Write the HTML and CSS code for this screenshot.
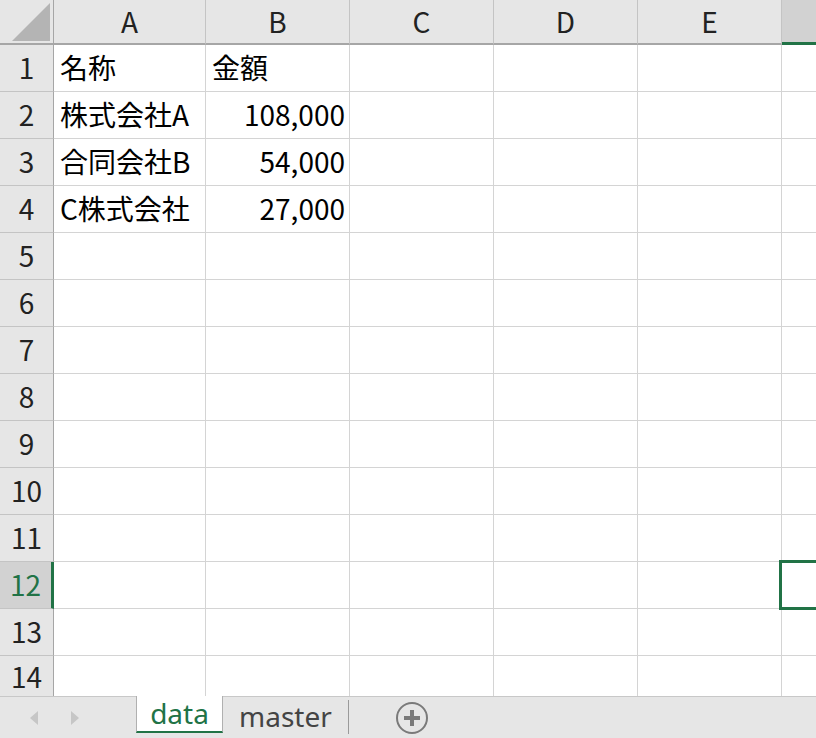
FILE: index.html
```html
<!DOCTYPE html>
<html lang="ja">
<head>
    <meta charset="UTF-8">
    <title>Book1 - data</title>
    <link rel="stylesheet" href="styles.css">
</head>
<body>
    <div class="sheet-area">
        <div class="sheet">
            <div class="hd corner"><span class="tri"></span></div>
            <div class="hd col">A</div>
            <div class="hd col">B</div>
            <div class="hd col">C</div>
            <div class="hd col">D</div>
            <div class="hd col">E</div>
            <div class="hd col sel"></div>

            <div class="hd row">1</div>
            <div class="cell">名称</div><div class="cell">金額</div><div class="cell"></div><div class="cell"></div><div class="cell"></div><div class="cell"></div>

            <div class="hd row">2</div>
            <div class="cell">株式会社A</div><div class="cell num">108,000</div><div class="cell"></div><div class="cell"></div><div class="cell"></div><div class="cell"></div>

            <div class="hd row">3</div>
            <div class="cell">合同会社B</div><div class="cell num">54,000</div><div class="cell"></div><div class="cell"></div><div class="cell"></div><div class="cell"></div>

            <div class="hd row">4</div>
            <div class="cell">C株式会社</div><div class="cell num">27,000</div><div class="cell"></div><div class="cell"></div><div class="cell"></div><div class="cell"></div>

            <div class="hd row">5</div>
            <div class="cell"></div><div class="cell"></div><div class="cell"></div><div class="cell"></div><div class="cell"></div><div class="cell"></div>

            <div class="hd row">6</div>
            <div class="cell"></div><div class="cell"></div><div class="cell"></div><div class="cell"></div><div class="cell"></div><div class="cell"></div>

            <div class="hd row">7</div>
            <div class="cell"></div><div class="cell"></div><div class="cell"></div><div class="cell"></div><div class="cell"></div><div class="cell"></div>

            <div class="hd row">8</div>
            <div class="cell"></div><div class="cell"></div><div class="cell"></div><div class="cell"></div><div class="cell"></div><div class="cell"></div>

            <div class="hd row">9</div>
            <div class="cell"></div><div class="cell"></div><div class="cell"></div><div class="cell"></div><div class="cell"></div><div class="cell"></div>

            <div class="hd row">10</div>
            <div class="cell"></div><div class="cell"></div><div class="cell"></div><div class="cell"></div><div class="cell"></div><div class="cell"></div>

            <div class="hd row">11</div>
            <div class="cell"></div><div class="cell"></div><div class="cell"></div><div class="cell"></div><div class="cell"></div><div class="cell"></div>

            <div class="hd row sel">12</div>
            <div class="cell"></div><div class="cell"></div><div class="cell"></div><div class="cell"></div><div class="cell"></div><div class="cell active"></div>

            <div class="hd row">13</div>
            <div class="cell"></div><div class="cell"></div><div class="cell"></div><div class="cell"></div><div class="cell"></div><div class="cell"></div>

            <div class="hd row last">14</div>
            <div class="cell last"></div><div class="cell last"></div><div class="cell last"></div><div class="cell last"></div><div class="cell last"></div><div class="cell last"></div>
        </div>
    </div>

    <div class="tabbar">
        <div class="nav">
            <span class="arrow left"></span>
            <span class="arrow right"></span>
        </div>
        <div class="tab current">data</div>
        <div class="tab">master</div>
        <div class="add">
            <svg width="34" height="34" viewBox="0 0 34 34">
                <circle cx="17" cy="17" r="15" fill="none" stroke="#7a7a7a" stroke-width="2"/>
                <rect x="9" y="15" width="16" height="4" fill="#7a7a7a"/>
                <rect x="15" y="9" width="4" height="16" fill="#7a7a7a"/>
            </svg>
        </div>
    </div>
</body>
</html>
```

FILE: styles.css
```css
html, body {
    margin: 0;
    height: 100%;
}

body {
    font-family: "Noto Sans CJK JP", "Noto Sans", sans-serif;
    display: flex;
    flex-direction: column;
    height: 738px;
    overflow: hidden;
    background-color: white;
    color: #000;
}

.sheet-area {
    flex: 1;
    overflow: hidden;
}

/* the last row is only partly visible above the sheet tabs */
.sheet {
    display: grid;
    grid-template-columns: 54px 152px repeat(4, 144px) 1fr;
    grid-template-rows: 45px repeat(13, 47px) 40px;
}

.hd,
.cell {
    box-sizing: border-box;
    border-right: 1px solid #d4d4d4;
    border-bottom: 1px solid #d4d4d4;
    font-size: 28px;
    line-height: 30px;
    white-space: nowrap;
    display: flex;
    align-items: center;
    padding-bottom: 2px;
}

.hd {
    background-color: #e6e6e6;
    justify-content: center;
    color: #222;
}

.hd.col {
    border-right-color: #c4c4c4;
    border-bottom: 2px solid #a6a6a6;
}

.hd.col.sel {
    background-color: #d2d2d2;
    border-bottom: 3px solid #217346;
    border-right: none;
}

.corner {
    position: relative;
    border-bottom: 2px solid #a6a6a6;
    border-right: 1px solid #a6a6a6;
}

.corner .tri {
    position: absolute;
    right: 3px;
    bottom: 2px;
    width: 0;
    height: 0;
    border-left: 38px solid transparent;
    border-bottom: 38px solid #b4b4b4;
}

.hd.row {
    border-right: 1px solid #a6a6a6;
    border-bottom-color: #c4c4c4;
}

.hd.row.sel {
    background-color: #d2d2d2;
    color: #217346;
    border-right: 3px solid #217346;
}

.hd.last,
.cell.last {
    border-bottom: none;
    padding-top: 0;
    padding-bottom: 0;
}

.cell {
    padding-left: 6px;
    padding-right: 4px;
}

.cell:nth-child(7n) {
    border-right: none;
}

.cell.num {
    justify-content: flex-end;
}

.cell.active {
    position: relative;
}

.cell.active::after {
    content: "";
    position: absolute;
    top: -2px;
    left: -3px;
    width: 60px;
    height: 50px;
    box-sizing: border-box;
    border: 3px solid #217346;
}

.tabbar {
    height: 42px;
    flex-shrink: 0;
    box-sizing: border-box;
    border-top: 1px solid #c8c8c8;
    background-color: #e6e6e6;
    display: flex;
    align-items: flex-start;
}

.nav {
    width: 136px;
    height: 41px;
    display: flex;
    align-items: center;
    gap: 33px;
    padding-left: 30px;
    box-sizing: border-box;
}

.arrow {
    width: 0;
    height: 0;
    border-top: 7px solid transparent;
    border-bottom: 7px solid transparent;
}

.arrow.left {
    border-right: 8px solid #c6c6c6;
}

.arrow.right {
    border-left: 8px solid #c6c6c6;
}

.tab {
    font-family: "Noto Sans", "Noto Sans CJK JP", sans-serif;
    font-size: 28px;
    line-height: 34px;
    height: 36px;
    box-sizing: border-box;
    color: #444;
    padding: 0 16px;
}

.tab.current {
    width: 87px;
    margin-top: -1px;
    height: 37px;
    padding: 0;
    text-align: center;
    background-color: white;
    color: #217346;
    border-left: 1px solid #b0b0b0;
    border-right: 1px solid #b0b0b0;
    border-bottom: 2px solid #217346;
}

.tab:not(.current) {
    margin-top: 3px;
    height: 34px;
    line-height: 32px;
    border-right: 1px solid #9a9a9a;
}

.add {
    margin-left: 46px;
    margin-top: 4px;
    height: 34px;
}
```
